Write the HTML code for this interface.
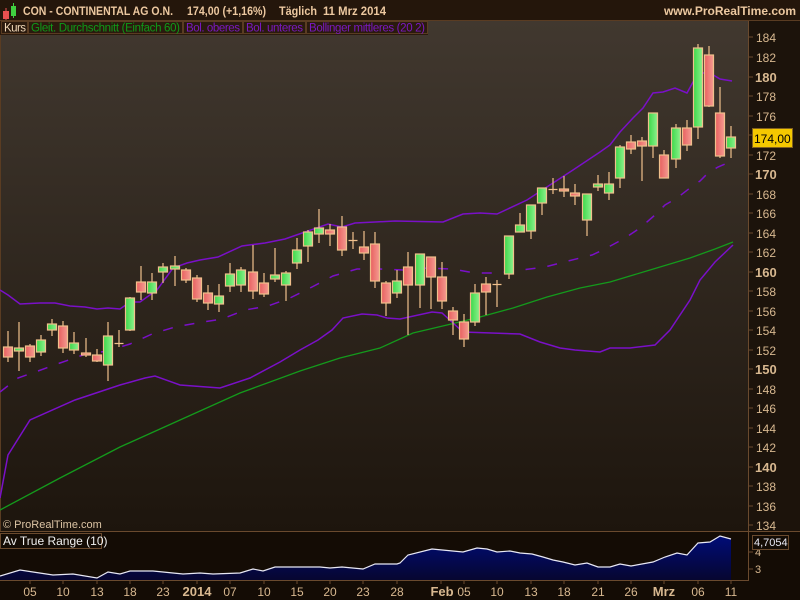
<!DOCTYPE html>
<html><head><meta charset="utf-8"><style>
body{margin:0;background:#140c05;width:800px;height:600px;overflow:hidden;font-family:"Liberation Sans",sans-serif}
svg{display:block}
</style></head><body>
<svg width="800" height="600" viewBox="0 0 800 600" xmlns="http://www.w3.org/2000/svg" font-family="Liberation Sans, sans-serif">
<defs>
<linearGradient id="bg" x1="0" y1="0" x2="0" y2="1"><stop offset="0" stop-color="#41382f"/><stop offset="1" stop-color="#1d150d"/></linearGradient>
<linearGradient id="atr" x1="0" y1="0" x2="0" y2="1"><stop offset="0" stop-color="#000c78"/><stop offset="1" stop-color="#060630"/></linearGradient>
<linearGradient id="gr" x1="0" y1="0" x2="1" y2="0"><stop offset="0" stop-color="#3cd84a"/><stop offset="1" stop-color="#8cf08c"/></linearGradient>
<linearGradient id="rd" x1="0" y1="0" x2="1" y2="0"><stop offset="0" stop-color="#e86060"/><stop offset="1" stop-color="#f49a90"/></linearGradient>
<clipPath id="cp"><rect x="0" y="35" width="748" height="495"/></clipPath>
</defs>
<rect width="800" height="600" fill="#140c05"/>
<rect x="0" y="0" width="800" height="20" fill="#24160b"/>
<line x1="0" y1="20.5" x2="800" y2="20.5" stroke="#5a3c22"/>
<rect x="3" y="11" width="6" height="8" fill="#e85050"/><line x1="6" y1="8" x2="6" y2="20" stroke="#e85050"/>
<rect x="11" y="6" width="5" height="10" fill="#40d040"/><line x1="13.5" y1="3" x2="13.5" y2="18" stroke="#40d040"/>
<g font-size="12" font-weight="bold" fill="#ecc8a0">
<text x="23" y="15" textLength="150" lengthAdjust="spacingAndGlyphs">CON - CONTINENTAL AG O.N.</text>
<text x="187" y="15" textLength="79" lengthAdjust="spacingAndGlyphs">174,00 (+1,16%)</text>
<text x="279" y="15" textLength="38" lengthAdjust="spacingAndGlyphs">Täglich</text>
<text x="323" y="15" textLength="63" lengthAdjust="spacingAndGlyphs">11 Mrz 2014</text>
<text x="796" y="15" text-anchor="end">www.ProRealTime.com</text>
</g>
<rect x="0" y="21" width="748" height="510" fill="url(#bg)"/>
<rect x="748" y="21" width="52" height="510" fill="#1c130b"/>
<line x1="748.5" y1="21" x2="748.5" y2="581" stroke="#6a4a2e"/>
<line x1="0.5" y1="21" x2="0.5" y2="531" stroke="#5a3c22"/>
<rect x="0" y="21" width="428" height="14" fill="#2a1a0e"/>
<g font-size="11.5">
<rect x="1.5" y="21.5" width="26" height="12" fill="none" stroke="#5a3c22"/><text x="4" y="31.5" fill="#f0d8b8" textLength="22">Kurs</text>
<rect x="28.5" y="21.5" width="154" height="12" fill="none" stroke="#5a3c22"/><text x="31" y="31.5" fill="#0f9a18" textLength="149">Gleit. Durchschnitt (Einfach 60)</text>
<rect x="183.5" y="21.5" width="59" height="12" fill="none" stroke="#5a3c22"/><text x="186" y="31.5" fill="#7a18c0" textLength="54">Bol. oberes</text>
<rect x="243.5" y="21.5" width="62" height="12" fill="none" stroke="#5a3c22"/><text x="246" y="31.5" fill="#7a18c0" textLength="57">Bol. unteres</text>
<rect x="306.5" y="21.5" width="121" height="12" fill="none" stroke="#5a3c22"/><text x="309" y="31.5" fill="#7a18c0" textLength="116">Bollinger mittleres (20 2)</text>
</g>
<g clip-path="url(#cp)" fill="none">
<polyline stroke="#149a1c" stroke-width="1.3" points="0,510 60,478 120,447 180,420 240,393 300,371 340,358 380,348 413,333 447,325 480,317 513,308 547,297 580,288 610,282 650,270 690,258 715,249 733,242"/>
<polyline stroke="#7a10c8" stroke-width="1.5" points="0,290 8,295 20,304 40,303 55,303 70,306 85,307 97,309 108,308 120,309 130,302 140,302 157,290 173,268 187,263 200,260 218,257 242,246 265,243 285,239 305,232 328,224 342,227 355,223 375,222 395,221 443,222 463,214 480,213 497,214 527,200 553,183 573,170 600,152 610,145 620,132 633,118 643,108 653,93 663,92 675,88 687,93 698,73 710,73 720,79 732,81"/>
<polyline stroke="#7a10c8" stroke-width="1.5" points="0,498 8,455 30,420 75,400 120,385 145,378 155,376 180,385 220,388 250,378 280,362 300,350 318,340 332,330 343,318 362,314 377,315 387,318 400,319 432,312 442,313 463,332 520,334 540,342 560,348 575,350 600,352 610,348 630,348 655,345 670,330 690,300 700,280 715,262 733,245"/>
<polyline stroke="#7a10c8" stroke-width="1.5" stroke-dasharray="10,12" points="0,392 18,378 38,371 60,363 83,355 107,351 130,344 152,334 175,327 197,323 222,319 245,310 268,306 290,298 312,287 333,276 357,269 380,269 403,270 427,268 452,269 475,273 498,273 522,270 545,267 568,261 592,255 603,250 625,238 640,228 655,215 665,205 677,198 690,188 700,181 708,173 718,167 732,161"/>
</g>
<g stroke="#f0c08c" stroke-width="1.2">
<path fill="none" d="M8 331V362M19 322V371M30 344V362M41 335V356M52 319V336M63 321V353M74 332V354M86 338V357M97 349V362M108 322V381M119 330V347M130 297V331M141 266V300M152 273V300M163 263V283M175 256V286M186 268V283M197 275V302M208 285V310M219 284V312M230 263V292M241 267V292M253 245V299M264 273V297M275 248V282M286 271V301M297 238V269M308 230V262M319 209V243M330 224V246M342 216V256M353 232V249M364 231V260M375 232V288M386 281V316M397 270V298M408 252V335M420 254V308M431 257V309M442 262V309M453 307V335M464 314V347M475 284V326M486 277V315M497 280V307M509 236V279M520 213V232M531 205V239M542 188V215M553 178V194M564 176V197M575 184V205M587 194V236M598 175V191M609 172V200M620 145V188M631 135V154M642 137V181M653 113V158M664 150V178M676 124V168M687 120V151M698 44V139M709 46V107M720 87V158M731 126V158"/>
<path fill="none" d="M114.5 343.5H123.5M348.5 240.5H357.5M492.5 284.5H501.5M548.5 189.5H557.5"/>
<g fill="url(#rd)">
<rect x="3.5" y="347" width="9" height="10"/><rect x="25.5" y="346" width="9" height="11"/><rect x="58.5" y="326" width="9" height="22"/><rect x="81.5" y="353" width="9" height="2"/><rect x="92.5" y="355" width="9" height="6"/><rect x="136.5" y="282" width="9" height="10"/><rect x="181.5" y="270" width="9" height="10"/><rect x="192.5" y="278" width="9" height="21"/><rect x="203.5" y="293" width="9" height="10"/><rect x="248.5" y="272" width="9" height="19"/><rect x="259.5" y="283" width="9" height="11"/><rect x="325.5" y="230" width="9" height="4"/><rect x="337.5" y="227" width="9" height="23"/><rect x="359.5" y="247" width="9" height="6"/><rect x="370.5" y="244" width="9" height="37"/><rect x="381.5" y="283" width="9" height="20"/><rect x="403.5" y="267" width="9" height="18"/><rect x="426.5" y="257" width="9" height="20"/><rect x="437.5" y="277" width="9" height="24"/><rect x="448.5" y="311" width="9" height="9"/><rect x="459.5" y="322" width="9" height="17"/><rect x="481.5" y="284" width="9" height="8"/><rect x="559.5" y="189" width="9" height="2"/><rect x="570.5" y="193" width="9" height="3"/><rect x="626.5" y="142" width="9" height="7"/><rect x="637.5" y="141" width="9" height="5"/><rect x="659.5" y="155" width="9" height="23"/><rect x="682.5" y="128" width="9" height="17"/><rect x="704.5" y="55" width="9" height="51"/><rect x="715.5" y="113" width="9" height="43"/>
</g>
<g fill="url(#gr)">
<rect x="14.5" y="348" width="9" height="3"/><rect x="36.5" y="340" width="9" height="12"/><rect x="47.5" y="324" width="9" height="6"/><rect x="69.5" y="343" width="9" height="7"/><rect x="103.5" y="336" width="9" height="29"/><rect x="125.5" y="298" width="9" height="32"/><rect x="147.5" y="282" width="9" height="11"/><rect x="158.5" y="267" width="9" height="5"/><rect x="170.5" y="266" width="9" height="3"/><rect x="214.5" y="296" width="9" height="8"/><rect x="225.5" y="274" width="9" height="12"/><rect x="236.5" y="270" width="9" height="15"/><rect x="270.5" y="275" width="9" height="4"/><rect x="281.5" y="273" width="9" height="12"/><rect x="292.5" y="250" width="9" height="13"/><rect x="303.5" y="232" width="9" height="14"/><rect x="314.5" y="228" width="9" height="6"/><rect x="392.5" y="281" width="9" height="12"/><rect x="415.5" y="254" width="9" height="31"/><rect x="470.5" y="293" width="9" height="29"/><rect x="504.5" y="236" width="9" height="38"/><rect x="515.5" y="225" width="9" height="7"/><rect x="526.5" y="205" width="9" height="26"/><rect x="537.5" y="188" width="9" height="15"/><rect x="582.5" y="194" width="9" height="26"/><rect x="593.5" y="184" width="9" height="3"/><rect x="604.5" y="184" width="9" height="9"/><rect x="615.5" y="147" width="9" height="31"/><rect x="648.5" y="113" width="9" height="33"/><rect x="671.5" y="128" width="9" height="31"/><rect x="693.5" y="48" width="9" height="79"/><rect x="726.5" y="137" width="9" height="11"/>
</g>
</g>
<g stroke="#6a4a2e">
<path d="M748 37h5M748 57h5M748 77h5M748 96h5M748 116h5M748 135h5M748 155h5M748 174h5M748 194h5M748 213h5M748 233h5M748 252h5M748 272h5M748 291h5M748 311h5M748 330h5M748 350h5M748 369h5M748 389h5M748 408h5M748 428h5M748 447h5M748 467h5M748 486h5M748 506h5M748 525h5"/>
</g>
<g font-size="12" fill="#d8b890">
<text x="756" y="42">184</text><text x="756" y="62">182</text><text x="755" y="82" font-size="13" font-weight="bold">180</text><text x="756" y="101">178</text><text x="756" y="121">176</text><text x="756" y="160">172</text><text x="755" y="179" font-size="13" font-weight="bold">170</text><text x="756" y="199">168</text><text x="756" y="218">166</text><text x="756" y="238">164</text><text x="756" y="257">162</text><text x="755" y="277" font-size="13" font-weight="bold">160</text><text x="756" y="296">158</text><text x="756" y="316">156</text><text x="756" y="335">154</text><text x="756" y="355">152</text><text x="755" y="374" font-size="13" font-weight="bold">150</text><text x="756" y="394">148</text><text x="756" y="413">146</text><text x="756" y="433">144</text><text x="756" y="452">142</text><text x="755" y="472" font-size="13" font-weight="bold">140</text><text x="756" y="491">138</text><text x="756" y="511">136</text><text x="756" y="530">134</text>
</g>
<rect x="752.5" y="128.5" width="40" height="19" fill="#f4c800" stroke="#806020"/>
<text x="754" y="143" font-size="12" fill="#000">174,00</text>
<text x="3" y="528" font-size="11" fill="#dcc4a4">© ProRealTime.com</text>
<line x1="0" y1="531.5" x2="800" y2="531.5" stroke="#6a4a2e"/>
<polygon fill="url(#atr)" points="0,576 20,570 33,572 53,575 73,574 97,578 108,572 120,574 130,571 153,571 163,572 183,574 200,573 213,574 240,573 253,569 263,571 275,567 300,567 320,567 330,568 342,567 363,569 375,564 397,564 400,563 408,555 432,549 463,552 477,548 487,549 497,552 510,551 520,553 532,554 543,557 553,560 563,562 575,565 587,563 598,567 610,567 620,564 631,566 653,562 665,557 677,553 687,555 698,543 710,542 720,536 731,539 731,580 0,580"/>
<polyline fill="none" stroke="#e8e8f4" stroke-width="1.2" points="0,576 20,570 33,572 53,575 73,574 97,578 108,572 120,574 130,571 153,571 163,572 183,574 200,573 213,574 240,573 253,569 263,571 275,567 300,567 320,567 330,568 342,567 363,569 375,564 397,564 400,563 408,555 432,549 463,552 477,548 487,549 497,552 510,551 520,553 532,554 543,557 553,560 563,562 575,565 587,563 598,567 610,567 620,564 631,566 653,562 665,557 677,553 687,555 698,543 710,542 720,536 731,539"/>
<rect x="0.5" y="533.5" width="101" height="15" fill="#140c05" stroke="#6a4a2e"/>
<text x="3" y="545" font-size="12" fill="#f0f0f0">Av True Range (10)</text>
<path d="M748 552h5M748 569h5" stroke="#6a4a2e"/>
<text x="755" y="556" font-size="11" fill="#d8b890">4</text>
<text x="755" y="573" font-size="11" fill="#d8b890">3</text>
<rect x="752.5" y="535.5" width="36" height="14" fill="#140c05" stroke="#6a4a2e"/>
<text x="754" y="546" font-size="11" fill="#e8e8f4">4,7054</text>
<line x1="0" y1="580.5" x2="748" y2="580.5" stroke="#6a4a2e"/>
<path stroke="#6a4a2e" d="M30 580v4M63 580v4M97 580v4M130 580v4M163 580v4M197 580v4M230 580v4M264 580v4M297 580v4M330 580v4M363 580v4M397 580v4M441 580v4M464 580v4M497 580v4M531 580v4M564 580v4M598 580v4M631 580v4M664 580v4M698 580v4M731 580v4"/>
<g font-size="12" fill="#d8b890" text-anchor="middle">
<text x="30" y="596">05</text><text x="63" y="596">10</text><text x="97" y="596">13</text><text x="130" y="596">18</text><text x="163" y="596">23</text><text x="197" y="596" font-weight="bold" font-size="13">2014</text><text x="230" y="596">07</text><text x="264" y="596">10</text><text x="297" y="596">15</text><text x="330" y="596">20</text><text x="363" y="596">23</text><text x="397" y="596">28</text><text x="442" y="596" font-weight="bold" font-size="13">Feb</text><text x="464" y="596">05</text><text x="497" y="596">10</text><text x="531" y="596">13</text><text x="564" y="596">18</text><text x="598" y="596">21</text><text x="631" y="596">26</text><text x="664" y="596" font-weight="bold" font-size="13">Mrz</text><text x="698" y="596">06</text><text x="731" y="596">11</text>
</g>
</svg>
</body></html>
